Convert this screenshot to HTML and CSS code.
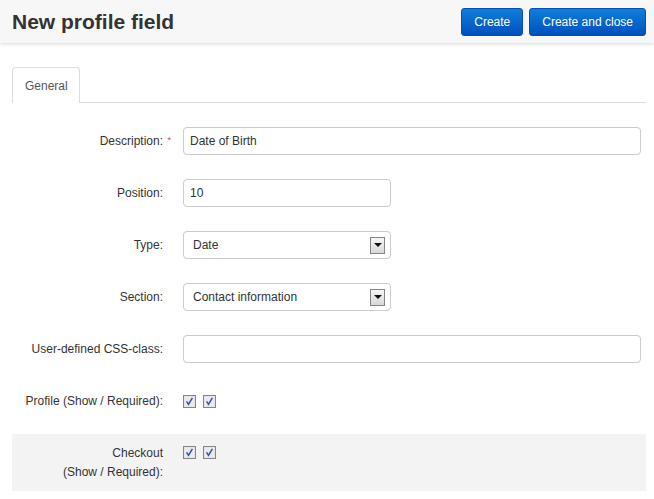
FILE: index.html
```html
<!DOCTYPE html>
<html lang="en">
<head>
<meta charset="utf-8">
<title>New profile field</title>
<link rel="stylesheet" href="styles.css">
</head>
<body>
<header class="topbar">
  <h1 class="title">New profile field</h1>
  <div class="actions">
    <button class="btn" type="button">Create</button>
    <button class="btn" type="button">Create and close</button>
  </div>
</header>
<main class="content">
  <div class="tabs">
    <div class="tab">General</div>
  </div>
  <form class="form">
    <div class="row">
      <div class="label"><span>Description:</span><span class="req">*</span></div>
      <div class="field"><input class="input wide" type="text" value="Date of Birth"></div>
    </div>
    <div class="row">
      <div class="label"><span>Position:</span><span class="req"></span></div>
      <div class="field"><input class="input narrow" type="text" value="10"></div>
    </div>
    <div class="row">
      <div class="label"><span>Type:</span><span class="req"></span></div>
      <div class="field"><div class="select narrow"><span>Date</span><span class="arrow"></span></div></div>
    </div>
    <div class="row">
      <div class="label"><span>Section:</span><span class="req"></span></div>
      <div class="field"><div class="select narrow"><span>Contact information</span><span class="arrow"></span></div></div>
    </div>
    <div class="row">
      <div class="label"><span>User-defined CSS-class:</span><span class="req"></span></div>
      <div class="field"><input class="input wide" type="text" value=""></div>
    </div>
    <div class="row">
      <div class="label"><span>Profile (Show / Required):</span><span class="req"></span></div>
      <div class="field checks">
        <svg class="cb" width="13" height="13" viewBox="0 0 13 13"><rect x="0.5" y="0.5" width="12" height="12" fill="#e2e2e2" stroke="#858585"/><rect x="1.5" y="1.5" width="10" height="10" fill="#eaeaea"/><path d="M3.6 6.4 L5.5 9.4 L9.4 2.8" stroke="#3552a6" stroke-width="1.5" fill="none"/></svg>
        <svg class="cb" width="13" height="13" viewBox="0 0 13 13"><rect x="0.5" y="0.5" width="12" height="12" fill="#e2e2e2" stroke="#858585"/><rect x="1.5" y="1.5" width="10" height="10" fill="#eaeaea"/><path d="M3.6 6.4 L5.5 9.4 L9.4 2.8" stroke="#3552a6" stroke-width="1.5" fill="none"/></svg>
      </div>
    </div>
    <div class="row shaded">
      <div class="label two"><span>Checkout<br>(Show / Required):</span><span class="req"></span></div>
      <div class="field checks top">
        <svg class="cb" width="13" height="13" viewBox="0 0 13 13"><rect x="0.5" y="0.5" width="12" height="12" fill="#e2e2e2" stroke="#858585"/><rect x="1.5" y="1.5" width="10" height="10" fill="#eaeaea"/><path d="M3.6 6.4 L5.5 9.4 L9.4 2.8" stroke="#3552a6" stroke-width="1.5" fill="none"/></svg>
        <svg class="cb" width="13" height="13" viewBox="0 0 13 13"><rect x="0.5" y="0.5" width="12" height="12" fill="#e2e2e2" stroke="#858585"/><rect x="1.5" y="1.5" width="10" height="10" fill="#eaeaea"/><path d="M3.6 6.4 L5.5 9.4 L9.4 2.8" stroke="#3552a6" stroke-width="1.5" fill="none"/></svg>
      </div>
    </div>
  </form>
</main>
</body>
</html>
```
FILE: styles.css
```css
* { box-sizing: border-box; }

body {
  margin: 0;
  font-family: "Liberation Sans", Arial, sans-serif;
  font-size: 12px;
  color: #333;
  background: #fff;
}

.topbar {
  display: flex;
  align-items: center;
  justify-content: space-between;
  height: 43px;
  padding: 0 8px 0 12px;
  background: #f7f7f7;
  box-shadow: 0 1px 4px rgba(0, 0, 0, 0.16);
}

.title {
  margin: 0;
  font-size: 21px;
  font-weight: bold;
  color: #333;
}

.actions {
  display: flex;
  gap: 6px;
}

.btn {
  height: 28px;
  padding: 0 12px;
  border: 1px solid #0a4fae;
  border-radius: 3px;
  background: linear-gradient(#0e80da, #004fbe);
  color: #fff;
  font-family: "Liberation Sans", Arial, sans-serif;
  font-size: 12px;
}

.content {
  padding: 24px 8px 0 12px;
}

.tabs {
  display: flex;
  height: 36px;
  border-bottom: 1px solid #ddd;
}

.tab {
  height: 36px;
  margin-bottom: -1px;
  padding: 0 11px 0 12px;
  display: flex;
  align-items: center;
  border: 1px solid #ddd;
  border-bottom: none;
  border-radius: 4px 4px 0 0;
  background: #fff;
  color: #555;
  font-size: 12px;
}

.form {
  padding-top: 12px;
}

.row {
  display: grid;
  grid-template-columns: 159px 1fr;
  column-gap: 12px;
  align-items: center;
  padding: 12px 0;
}

.row > * { min-height: 28px; }

.label {
  display: flex;
  justify-content: flex-end;
  align-items: center;
  text-align: right;
  color: #333;
}

.req {
  width: 8px;
  align-self: flex-start;
  padding-top: 9px;
  padding-left: 3px;
  color: #e0393c;
  font-size: 9px;
  line-height: 9px;
}

.field {
  display: flex;
  align-items: center;
}

.input {
  height: 28px;
  padding: 0 6px;
  border: 1px solid #ccc;
  border-radius: 4px;
  font-family: "Liberation Sans", Arial, sans-serif;
  font-size: 12px;
  color: #333;
  background: #fff;
}

.wide { width: 458px; }
.narrow { width: 208px; }

.select {
  height: 28px;
  display: flex;
  align-items: center;
  justify-content: space-between;
  padding: 0 5px 0 9px;
  border: 1px solid #ccc;
  border-radius: 4px;
  background: #fff;
  color: #333;
}

.arrow {
  width: 15px;
  height: 17px;
  border: 1px solid #858585;
  background: linear-gradient(#f6f6f6, #d8d8d8);
  display: flex;
  align-items: center;
  justify-content: center;
}

.arrow::before {
  content: "";
  border-left: 4px solid transparent;
  border-right: 4px solid transparent;
  border-top: 4px solid #111;
}

.checks {
  gap: 7px;
}

.cb { display: block; }

.shaded {
  margin-top: 7px;
  padding: 10px 0 9px;
  background: #f3f3f3;
  align-items: start;
}

.label.two {
  line-height: 19px;
  align-items: flex-start;
}

.checks.top {
  align-items: flex-start;
  padding-top: 2px;
}
```
